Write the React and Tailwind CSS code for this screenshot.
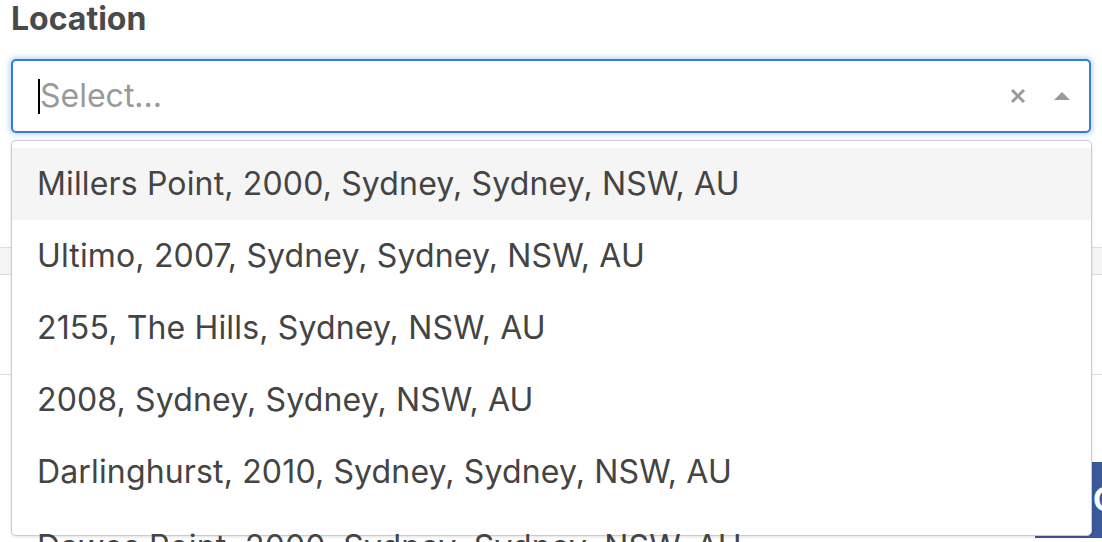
import React from "react";

const items = [
  "Millers Point, 2000, Sydney, Sydney, NSW, AU",
  "Ultimo, 2007, Sydney, Sydney, NSW, AU",
  "2155, The Hills, Sydney, NSW, AU",
  "2008, Sydney, Sydney, NSW, AU",
  "Darlinghurst, 2010, Sydney, Sydney, NSW, AU",
  "Dawes Point, 2000, Sydney, Sydney, NSW, AU",
];

export default function App() {
  return (
    <div
      className="relative h-[542px] w-[1102px] overflow-hidden bg-white"
      style={{ fontFamily: "Inter, 'Noto Sans', sans-serif" }}
    >
      <div className="flex flex-col">
        <div className="pl-[11px] text-[32px] font-bold leading-[38px] text-[#4a4a4a]">
          Location
        </div>
        <div className="mt-[21px] ml-[11px] flex h-[74px] w-[1080px] items-center rounded-[5px] border-2 border-[#3a7bd5] bg-white shadow-[0_0_5px_2px_rgba(59,130,246,0.3)]">
          <div className="flex flex-1 items-center pl-[25px]">
            <span className="h-[35px] w-[2px] bg-black" />
            <span className="text-[32px] leading-[40px] text-[#9a9a9a]">Select...</span>
          </div>
          <div className="flex items-center pr-[19px]">
            <svg width="16" height="16" viewBox="0 0 16 16" className="mr-[28px]">
              <path d="M2 2 L14 14 M14 2 L2 14" stroke="#9a9a9a" strokeWidth="3" />
            </svg>
            <svg width="16" height="8" viewBox="0 0 16 8">
              <path d="M0 8 L8 0 L16 8 Z" fill="#9a9a9a" />
            </svg>
          </div>
        </div>
        <div className="mt-[114px] h-[28px] border-y border-[#dedede] bg-[#f5f5f5]" />
        <div className="mt-[99px] border-t border-[#dedede]" />
        <div className="mt-[87px] flex justify-end">
          <div className="h-[76px] w-[67px] overflow-hidden rounded-tl-[4px] bg-[#3b5998] pl-[58px] pt-[18px] text-[32px] font-bold leading-[40px] text-white">
            Continue
          </div>
        </div>
      </div>

      <div className="absolute left-[11px] top-[140px] h-[396px] w-[1081px] rounded-[5px] border border-[#cccccc] bg-white pt-[7px] shadow-[0_1px_3px_rgba(0,0,0,0.12)]">
        {items.map((t, i) => (
          <div
            key={t}
            className={
              "flex h-[72px] items-center pl-[25px] text-[32px] leading-[40px] tracking-[0.15px] text-[#444444] " +
              (i === 0 ? "bg-[#f5f5f5]" : "") +
              (i === 5 ? " pt-[6px]" : "")
            }
          >
            <span className="whitespace-nowrap">{t}</span>
          </div>
        ))}
      </div>
    </div>
  );
}
